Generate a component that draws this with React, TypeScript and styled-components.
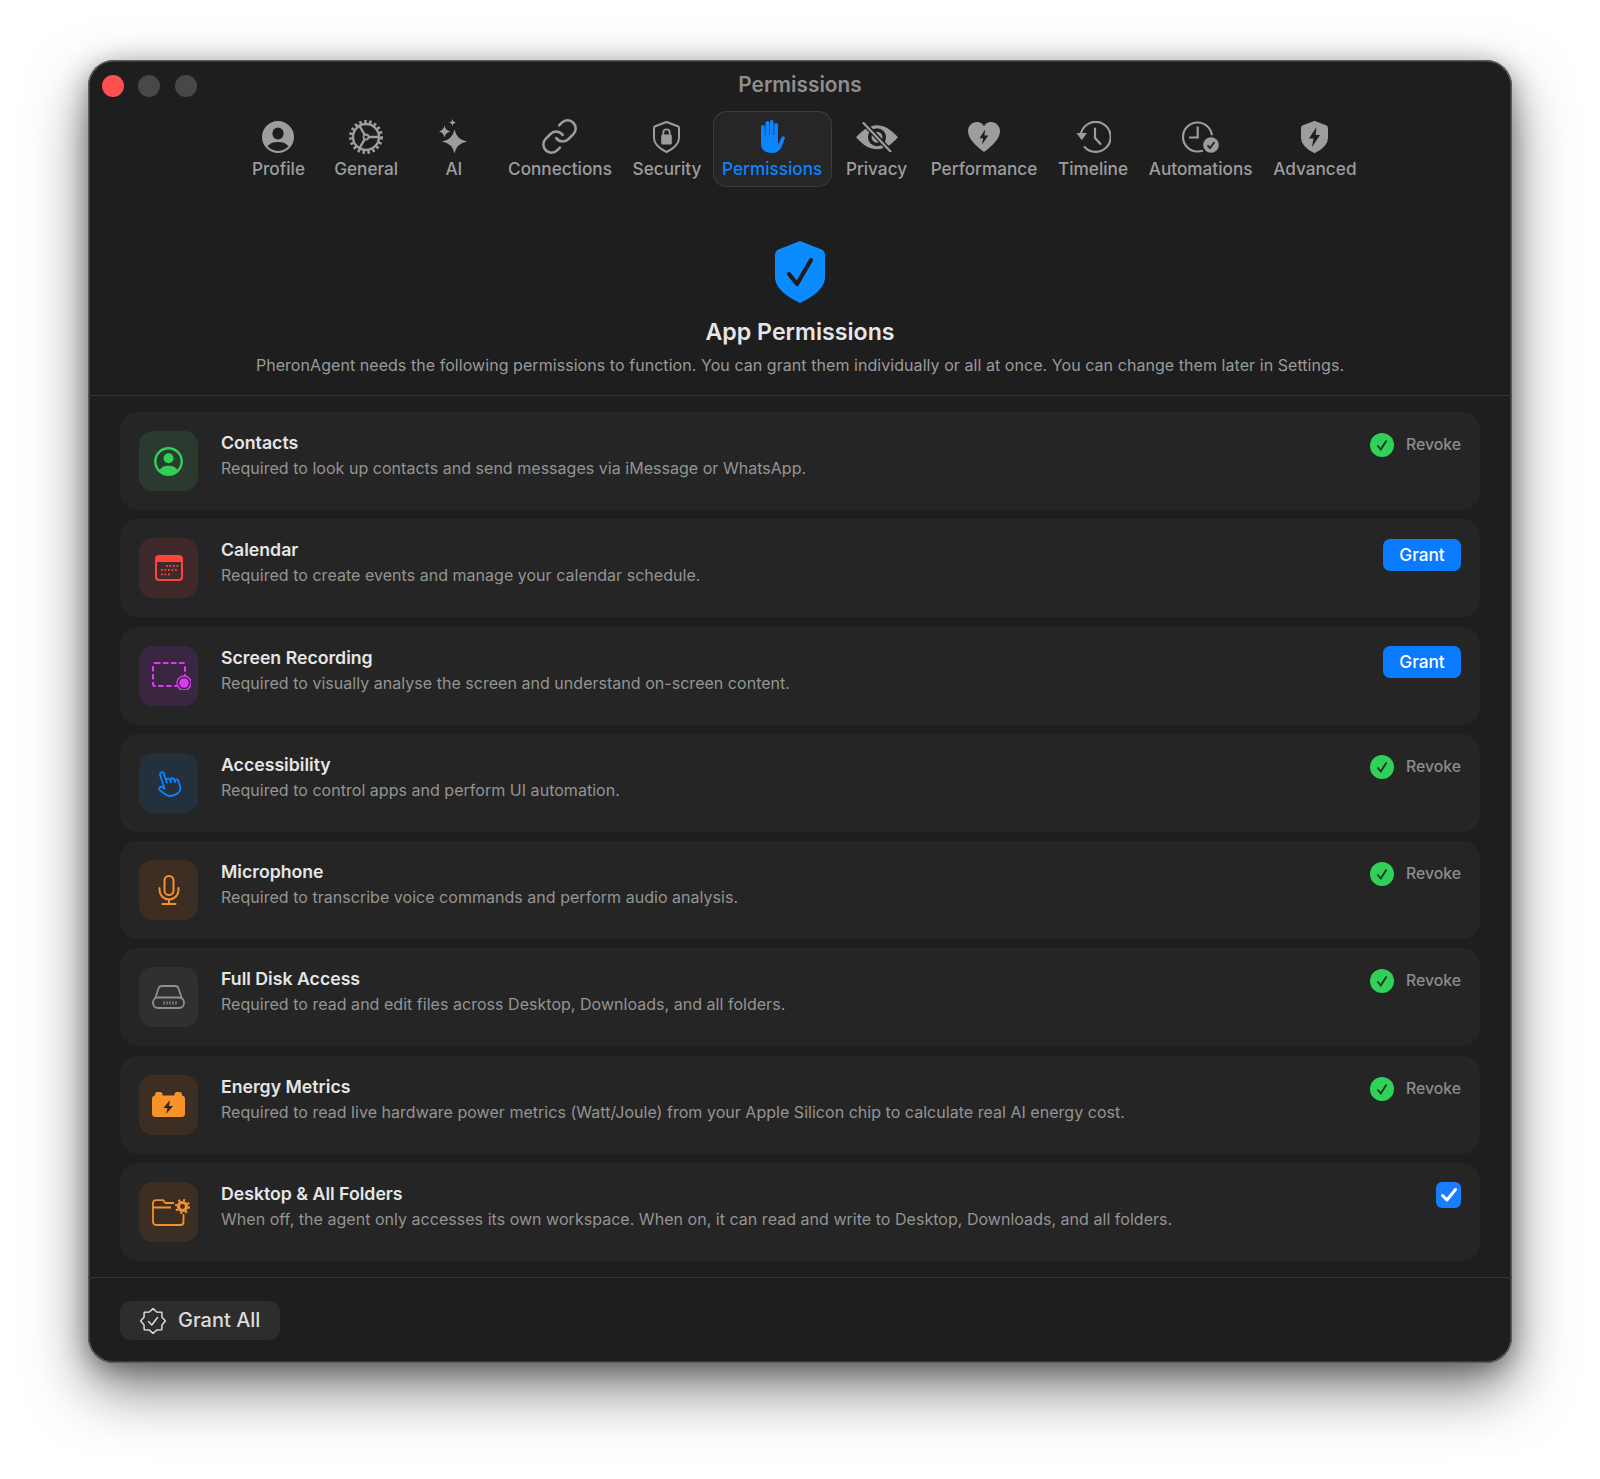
import React from "react";
import styled, { createGlobalStyle } from "styled-components";
import { Link as LinkIcon } from "lucide-react";

const GRAY = "#9d9d9d";
const BG = "#1e1e1e";

const Global = createGlobalStyle`
  html, body { margin: 0; padding: 0; background: #fff; }
  * { box-sizing: border-box; }
  body { font-family: Inter, "Noto Sans", "Liberation Sans", sans-serif; -webkit-font-smoothing: antialiased; }
`;

const Page = styled.div`
  height: 1479px;
  padding-top: 60px;
  display: flex;
  justify-content: center;
  align-items: flex-start;
  overflow: hidden;
  background: #fff;
`;
const Win = styled.div`
  width: 1424px;
  height: 1303px;
  display: flex;
  flex-direction: column;
  background: ${BG};
  border-radius: 26px;
  box-shadow: inset 0 0 0 1.5px #5c5c5c, 0 26px 60px rgba(0, 0, 0, 0.5), 0 6px 26px rgba(0, 0, 0, 0.35);
`;
const TitleBar = styled.div`
  height: 51px;
  flex: none;
  display: grid;
  grid-template-columns: 1fr auto 1fr;
  align-items: center;
  padding: 0 14px;
`;
const Lights = styled.div`
  display: flex;
  gap: 14.4px;
`;
const Light = styled.span<{ $c: string }>`
  width: 22px;
  height: 22px;
  border-radius: 50%;
  background: ${(p) => p.$c};
`;
const WinTitle = styled.div`
  font-size: 20.8px;
  font-weight: 600;
  color: #8e8e8e;
  margin-top: -2px;
`;
const Toolbar = styled.nav`
  display: flex;
  justify-content: center;
  gap: 1.7px;
  padding-left: 1.5px;
  flex: none;
`;
const Tab = styled.div<{ $active?: boolean }>`
  min-width: 86px;
  height: 76px;
  padding: 6.5px 9.5px 0;
  display: flex;
  flex-direction: column;
  align-items: center;
  border-radius: 14px;
  color: ${(p) => (p.$active ? "#0a84ff" : GRAY)};
  background: ${(p) => (p.$active ? "#262626" : "transparent")};
  box-shadow: ${(p) => (p.$active ? "inset 0 0 0 1px #3c3c3c" : "none")};
`;
const TabIcon = styled.div`
  height: 38px;
  display: flex;
  align-items: center;
  justify-content: center;
`;
const TabLabel = styled.div`
  font-size: 17.2px;
  line-height: 25px;
  font-weight: 500;
  white-space: nowrap;
`;
const Hero = styled.header`
  flex: none;
  display: flex;
  flex-direction: column;
  align-items: center;
  padding: 54px 0 20px;
  border-bottom: 1px solid #353535;
`;
const HeroTitle = styled.h1`
  margin: 14px 0 0;
  font-size: 23.2px;
  line-height: 30px;
  font-weight: 600;
  color: #e6e6e6;
`;
const HeroSub = styled.p`
  margin: 8px 0 0;
  font-size: 16px;
  line-height: 20px;
  letter-spacing: 0.057px;
  color: #9a9a9a;
`;
const List = styled.div`
  flex: none;
  display: flex;
  flex-direction: column;
  gap: 9.3px;
  padding: 16px 32px;
  border-bottom: 1px solid #353535;
`;
const Row = styled.div`
  height: 98px;
  display: flex;
  align-items: flex-start;
  padding: 19px;
  background: #252525;
  border-radius: 18px;
`;
const IconBox = styled.div<{ $bg: string }>`
  width: 59px;
  height: 60px;
  flex: none;
  margin-right: 23px;
  display: flex;
  align-items: center;
  justify-content: center;
  border-radius: 14px;
  background: ${(p) => p.$bg};
`;
const Texts = styled.div`
  flex: 1;
  min-width: 0;
  padding-top: 1px;
`;
const RowTitle = styled.div`
  font-size: 17.7px;
  line-height: 22px;
  font-weight: 600;
  color: #e6e6e6;
`;
const RowDesc = styled.div`
  margin-top: 4px;
  font-size: 16px;
  line-height: 20px;
  letter-spacing: 0.03px;
  color: #949494;
`;
const Status = styled.div`
  display: flex;
  align-items: center;
  gap: 12px;
  margin-top: 2px;
`;
const RevokeLabel = styled.span`
  font-size: 15.8px;
  line-height: 24px;
  font-weight: 500;
  color: #8c8c8c;
`;
const GrantBtn = styled.button`
  width: 78px;
  height: 32px;
  border: 0;
  padding: 0;
  border-radius: 7px;
  margin-top: 0.5px;
  background: #0a7aff;
  color: #fff;
  font: 500 17.2px/32px Inter, sans-serif;
`;
const Check = styled.div`
  width: 25px;
  height: 26px;
  border-radius: 6px;
  background: #1a7dff;
  display: flex;
  align-items: center;
  justify-content: center;
`;
const Footer = styled.footer`
  padding: 23px 32px 21px;
`;
const GrantAll = styled.button`
  height: 39px;
  width: 160px;
  border: 0;
  padding: 0 0 0 20px;
  display: flex;
  align-items: center;
  gap: 12px;
  border-radius: 10px;
  background: #2d2d2d;
  color: #dcdcdc;
  font: 500 20px/39px Inter, sans-serif;
`;

const Gear = () => (
  <svg width="34" height="34" viewBox="0 0 34 34" fill="none" stroke={GRAY}>
    <circle cx="17" cy="17" r="15" strokeWidth="4" strokeDasharray="2.400 2.490" />
    <circle cx="17" cy="17" r="13" strokeWidth="2.400" />
    <circle cx="17" cy="17" r="2.500" strokeWidth="1.800" />
    <path d="M19.500 17H29.500M15.700 14.800 10.700 6.200M15.700 19.200 10.700 27.800" strokeWidth="2.400" />
  </svg>
);
const Person = () => (
  <svg width="32" height="32" viewBox="0 0 32 32">
    <circle cx="16" cy="16" r="16" fill={GRAY} />
    <ellipse cx="16" cy="12.400" rx="5.600" ry="6" fill={BG} />
    <path d="M5.600 25.600C8 21.800 12 21 16 21s8 .8 10.400 4.600C23.600 28.400 20 30 16 30S8.400 28.400 5.600 25.600Z" fill={BG} />
  </svg>
);
const Sparkles = () => (
  <svg width="29" height="36" viewBox="0 0 29 36" fill={GRAY}>
    <path d="M15.500 10.500Q17.500 20.500 28 22.500 17.500 24.500 15.500 34.500 13.500 24.500 3 22.500 13.500 20.500 15.500 10.500Z" />
    <path d="M5.500 6.500Q6.500 11.500 11.500 12.500 6.500 13.500 5.500 18.500 4.500 13.500 -.5 12.500 4.500 11.500 5.500 6.500Z" />
    <path d="M13.500 0Q14 3 17 3.500 14 4 13.500 7 13 4 10 3.500 13 3 13.500 0Z" />
  </svg>
);
const Shield = ({ children, fill }: { children: React.ReactNode; fill?: boolean }) => (
  <svg width="27" height="32" viewBox="0 0 27 32">
    <path
      d="M13.500 1 24.800 5.200Q26 5.700 26 7.200V17C26 23.500 20 27.800 13.500 31 7 27.800 1 23.500 1 17V7.200Q1 5.700 2.200 5.200Z"
      fill={fill ? GRAY : "none"}
      stroke={GRAY}
      strokeWidth="2"
      strokeLinejoin="round"
    />
    {children}
  </svg>
);
const HandFill = () => (
  <svg width="25" height="33" viewBox="0 0 25 33" fill="#0a84ff">
    <rect x="1" y="5" width="3.800" height="20" rx="1.900" />
    <rect x="5.400" y="1" width="3.800" height="20" rx="1.900" />
    <rect x="9.800" y="0" width="3.800" height="20" rx="1.900" />
    <rect x="14.200" y="3" width="3.800" height="20" rx="1.900" />
    <path d="M1 15H18V25L22 16.500A2 2 0 0 1 25 18L21 28C19 31.500 16 33 12 33 5 33 1 29.500 1 24Z" />
  </svg>
);
const EyeSlash = () => (
  <svg width="42" height="30" viewBox="0 0 42 30">
    <path d="M0 15.200C8 6.500 14 3.200 21 3.200S34 6.500 42 15.200C34 24 28 27.200 21 27.200S8 24 0 15.200Z" fill={GRAY} />
    <circle cx="21" cy="15.200" r="9" fill={BG} />
    <circle cx="21" cy="15.200" r="5.500" fill={GRAY} />
    <path d="M7 0 35 30" stroke={BG} strokeWidth="5" />
    <path d="M7.500 1 34.500 29.500" stroke={GRAY} strokeWidth="2.200" strokeLinecap="round" />
  </svg>
);
const Heart = () => (
  <svg width="32" height="30" viewBox="0 0 32 30">
    <path d="M16 30C8 24 0 17 0 9 0 4 4 0 8.800 0 12 0 14.600 1.600 16 4.200 17.400 1.600 20 0 23.200 0 28 0 32 4 32 9 32 17 24 24 16 30Z" fill={GRAY} />
    <path d="M17.200 7.500 11.500 16.200H15.200L14 22.500 20.300 13.500H16.400Z" fill={BG} />
  </svg>
);
const History = () => (
  <svg width="35" height="32" viewBox="0 0 35 32" fill="none" stroke={GRAY} strokeWidth="2.200">
    <path d="M5 12.500A15 15 0 1 1 8 25.400" />
    <path d="M.500 12H11L5.700 19.200Z" fill={GRAY} stroke="none" />
    <path d="M19 7.500V17L24.500 23" strokeLinecap="round" />
  </svg>
);
const Auto = () => (
  <svg width="37" height="32" viewBox="0 0 37 32" fill="none">
    <circle cx="15.500" cy="16" r="14.500" stroke={GRAY} strokeWidth="2.200" />
    <path d="M15.700 5.500V16.500H7" stroke={GRAY} strokeWidth="2.200" />
    <circle cx="29" cy="24" r="10" fill={BG} />
    <circle cx="29" cy="24" r="7.800" fill={GRAY} />
    <path d="M25.500 24.200 28 27 32.500 21" stroke={BG} strokeWidth="1.800" fill="none" />
  </svg>
);
const HeroShield = () => (
  <svg width="50" height="62" viewBox="0 0 50 62">
    <path
      d="M25 0 46 8.200Q50 9.800 50 14V36C50 47 38 56 25 62 12 56 0 47 0 36V14Q0 9.800 4 8.200Z"
      fill="#0a8cff"
    />
    <path d="M14 33 22 43 36 19" fill="none" stroke={BG} strokeWidth="4.200" strokeLinecap="round" strokeLinejoin="round" />
  </svg>
);
const ContactIcon = () => (
  <svg width="29" height="29" viewBox="0 0 29 29">
    <circle cx="14.500" cy="14.500" r="13.200" fill="none" stroke="#30d158" strokeWidth="2.400" />
    <circle cx="14.500" cy="11.200" r="5" fill="#30d158" />
    <path d="M5.500 23.500C7.500 19.500 11 18.800 14.500 18.800S21.500 19.500 23.500 23.500C21 26 18 27 14.500 27S8 26 5.500 23.500Z" fill="#30d158" />
  </svg>
);
const CalendarIcon = () => (
  <svg width="28" height="26" viewBox="0 0 28 26">
    <rect x="1" y="1" width="26" height="24" rx="3" fill="none" stroke="#ff453a" strokeWidth="2" />
    <path d="M1 7V4Q1 1 4 1H24Q27 1 27 4V7Z" fill="#ff453a" />
    <g fill="#ff453a">
      {[[11, 10], [14.5, 10], [18, 10], [21.5, 10], [6, 14], [9.5, 14], [13, 14], [16.5, 14], [20, 14], [6, 18.5], [9.5, 18.5], [13, 18.5]].map(([x, y]) => (
        <rect key={`${x}-${y}`} x={x} y={y} width="1.800" height="1.800" />
      ))}
    </g>
  </svg>
);
const ScreenIcon = () => (
  <svg width="44" height="28" viewBox="-5 0 44 28" fill="none">
    <rect x="1" y="1" width="32" height="23" rx="2" stroke="#d93cf0" strokeWidth="2" strokeDasharray="5.500 2.500" />
    <circle cx="32" cy="21" r="7" fill="#3a2640" stroke="#d93cf0" strokeWidth="1.400" />
    <circle cx="32" cy="21" r="4.800" fill="#d93cf0" />
  </svg>
);
const HandPoint = () => (
  <svg width="26" height="28" viewBox="0 0 26 28" fill="none" stroke="#0a84ff" strokeWidth="1.800" strokeLinecap="round" strokeLinejoin="round">
    <g transform="rotate(-18 13 14)">
      <path d="M7 17V3.500a2 2 0 0 1 4 0V13" />
      <path d="M11 11.500a2 2 0 0 1 4 0V14" />
      <path d="M15 12.500a2 2 0 0 1 4 0V15" />
      <path d="M19 14a1.900 1.900 0 0 1 3.500 1.500V20c0 4-3 7-7 7H12c-3 0-4.500-1.500-6-3.500L2 18a2 2 0 0 1 3-2.500L7 18" />
    </g>
  </svg>
);
const MicIcon = () => (
  <svg width="22" height="30" viewBox="0 0 22 30" fill="none" stroke="#f5902a" strokeWidth="2">
    <rect x="6.500" y="1" width="9" height="19" rx="4.500" />
    <path d="M1.500 13V15A9.500 9.500 0 0 0 20.500 15V13" strokeLinecap="round" />
    <path d="M11 24.500V29M4.500 29H17.500" strokeLinecap="round" />
  </svg>
);
const DiskIcon = () => (
  <svg width="33" height="24" viewBox="0 0 33 24" fill="none" stroke="#8f8f8f" strokeWidth="1.800">
    <path d="M3 14 6.500 3.500Q7.200 1 10 1H23Q25.800 1 26.500 3.500L30 14" />
    <rect x="1" y="12.500" width="31" height="10.500" rx="5" />
    <path d="M12 16.200V19.500M15 16.200V19.500M18 16.200V19.500M21 16.200V19.500M24 16.200V19.500" strokeWidth="1.200" />
  </svg>
);
const BatteryIcon = () => (
  <svg width="33" height="25" viewBox="0 0 33 25">
    <rect x="0" y="3.500" width="33" height="21.500" rx="3.500" fill="#f8922a" />
    <rect x="3" y="0" width="7.500" height="7" rx="2.500" fill="#f8922a" />
    <rect x="22.500" y="0" width="7.500" height="7" rx="2.500" fill="#f8922a" />
    <path d="M18 8 11.500 16H15.500L14 22 21 14H17Z" fill="#33261a" />
  </svg>
);
const FolderIcon = () => (
  <svg width="43" height="27" viewBox="-5 0 43 27" fill="none">
    <path
      d="M22 4H13.500L11 1.200H4Q1 1.200 1 4V22.500Q1 26 4.500 26H28.500Q31.500 26 31.500 23V15M1 8.500H19"
      stroke="#f5902a"
      strokeWidth="1.800"
    />
    <circle cx="30.500" cy="7.500" r="6.500" stroke="#f5902a" strokeWidth="2.200" strokeDasharray="2.200 2.880" />
    <circle cx="30.500" cy="7.500" r="4" stroke="#f5902a" strokeWidth="3.200" />
  </svg>
);
const GreenCheck = () => (
  <svg width="24" height="24" viewBox="0 0 24 24">
    <circle cx="12" cy="12" r="12" fill="#30d158" />
    <path d="M7.500 12.500 10.800 16.500 16.500 7.500" fill="none" stroke="#16321f" strokeWidth="1.800" />
  </svg>
);

const badgePoints = Array.from({ length: 16 }, (_, i) => {
  const a = (i / 16) * Math.PI * 2 - Math.PI / 2;
  const r = i % 2 === 0 ? 12.4 : 9.8;
  return `${(13 + r * Math.cos(a)).toFixed(2)},${(13 + r * Math.sin(a)).toFixed(2)}`;
}).join(" ");
const StarBadge = () => (
  <svg width="26" height="26" viewBox="0 0 26 26" fill="none" stroke="#dcdcdc" strokeWidth="1.500" strokeLinejoin="round" strokeLinecap="round">
    <polygon points={badgePoints} />
    <path d="M8.500 13.500 11.800 17 17.500 9.500" />
  </svg>
);

const tabs: { label: string; icon: React.ReactNode; active?: boolean }[] = [
  { label: "Profile", icon: <Person /> },
  { label: "General", icon: <Gear /> },
  { label: "AI", icon: <Sparkles /> },
  { label: "Connections", icon: <LinkIcon size={39} strokeWidth={1.55} color={GRAY} /> },
  {
    label: "Security",
    icon: (
      <Shield>
        <rect x="8.200" y="13.500" width="10.600" height="10" rx="1.500" fill={GRAY} />
        <path d="M10.300 14V11.500A3.200 3.200 0 0 1 16.700 11.500V14" fill="none" stroke={GRAY} strokeWidth="1.800" />
      </Shield>
    ),
  },
  { label: "Permissions", icon: <HandFill />, active: true },
  { label: "Privacy", icon: <EyeSlash /> },
  { label: "Performance", icon: <Heart /> },
  { label: "Timeline", icon: <History /> },
  { label: "Automations", icon: <Auto /> },
  {
    label: "Advanced",
    icon: (
      <Shield fill>
        <path d="M15.500 6 8 17.500H12.500L11 26 19 14H14.500Z" fill={BG} />
      </Shield>
    ),
  },
];

type Action = "revoke" | "grant" | "check";
const rows: { title: string; desc: string; bg: string; icon: React.ReactNode; action: Action }[] = [
  { title: "Contacts", desc: "Required to look up contacts and send messages via iMessage or WhatsApp.", bg: "#2b3a2e", icon: <ContactIcon />, action: "revoke" },
  { title: "Calendar", desc: "Required to create events and manage your calendar schedule.", bg: "#3e2a2a", icon: <CalendarIcon />, action: "grant" },
  { title: "Screen Recording", desc: "Required to visually analyse the screen and understand on-screen content.", bg: "#3a2640", icon: <ScreenIcon />, action: "grant" },
  { title: "Accessibility", desc: "Required to control apps and perform UI automation.", bg: "#24303c", icon: <HandPoint />, action: "revoke" },
  { title: "Microphone", desc: "Required to transcribe voice commands and perform audio analysis.", bg: "#3d2e23", icon: <MicIcon />, action: "revoke" },
  { title: "Full Disk Access", desc: "Required to read and edit files across Desktop, Downloads, and all folders.", bg: "#303030", icon: <DiskIcon />, action: "revoke" },
  { title: "Energy Metrics", desc: "Required to read live hardware power metrics (Watt/Joule) from your Apple Silicon chip to calculate real AI energy cost.", bg: "#3d2e23", icon: <BatteryIcon />, action: "revoke" },
  { title: "Desktop & All Folders", desc: "When off, the agent only accesses its own workspace. When on, it can read and write to Desktop, Downloads, and all folders.", bg: "#3d2e23", icon: <FolderIcon />, action: "check" },
];

const ActionView = ({ kind }: { kind: Action }) => {
  if (kind === "grant") return <GrantBtn>Grant</GrantBtn>;
  if (kind === "check")
    return (
      <Check>
        <svg width="18" height="16" viewBox="0 0 18 16">
          <path d="M2.500 8.500 7 13 15.500 2.500" fill="none" stroke="#fff" strokeWidth="3" strokeLinecap="round" strokeLinejoin="round" />
        </svg>
      </Check>
    );
  return (
    <Status>
      <GreenCheck />
      <RevokeLabel>Revoke</RevokeLabel>
    </Status>
  );
};

export default function App() {
  return (
    <Page>
      <Global />
      <Win>
        <TitleBar>
          <Lights>
            <Light $c="#ff4f4f" />
            <Light $c="#484848" />
            <Light $c="#484848" />
          </Lights>
          <WinTitle>Permissions</WinTitle>
          <span />
        </TitleBar>
        <Toolbar>
          {tabs.map((t) => (
            <Tab key={t.label} $active={t.active}>
              <TabIcon>{t.icon}</TabIcon>
              <TabLabel>{t.label}</TabLabel>
            </Tab>
          ))}
        </Toolbar>
        <Hero>
          <HeroShield />
          <HeroTitle>App Permissions</HeroTitle>
          <HeroSub>
            PheronAgent needs the following permissions to function. You can grant them individually or all at once. You can change them later in Settings.
          </HeroSub>
        </Hero>
        <List>
          {rows.map((r) => (
            <Row key={r.title}>
              <IconBox $bg={r.bg}>{r.icon}</IconBox>
              <Texts>
                <RowTitle>{r.title}</RowTitle>
                <RowDesc>{r.desc}</RowDesc>
              </Texts>
              <ActionView kind={r.action} />
            </Row>
          ))}
        </List>
        <Footer>
          <GrantAll>
            <StarBadge />
            Grant All
          </GrantAll>
        </Footer>
      </Win>
    </Page>
  );
}
